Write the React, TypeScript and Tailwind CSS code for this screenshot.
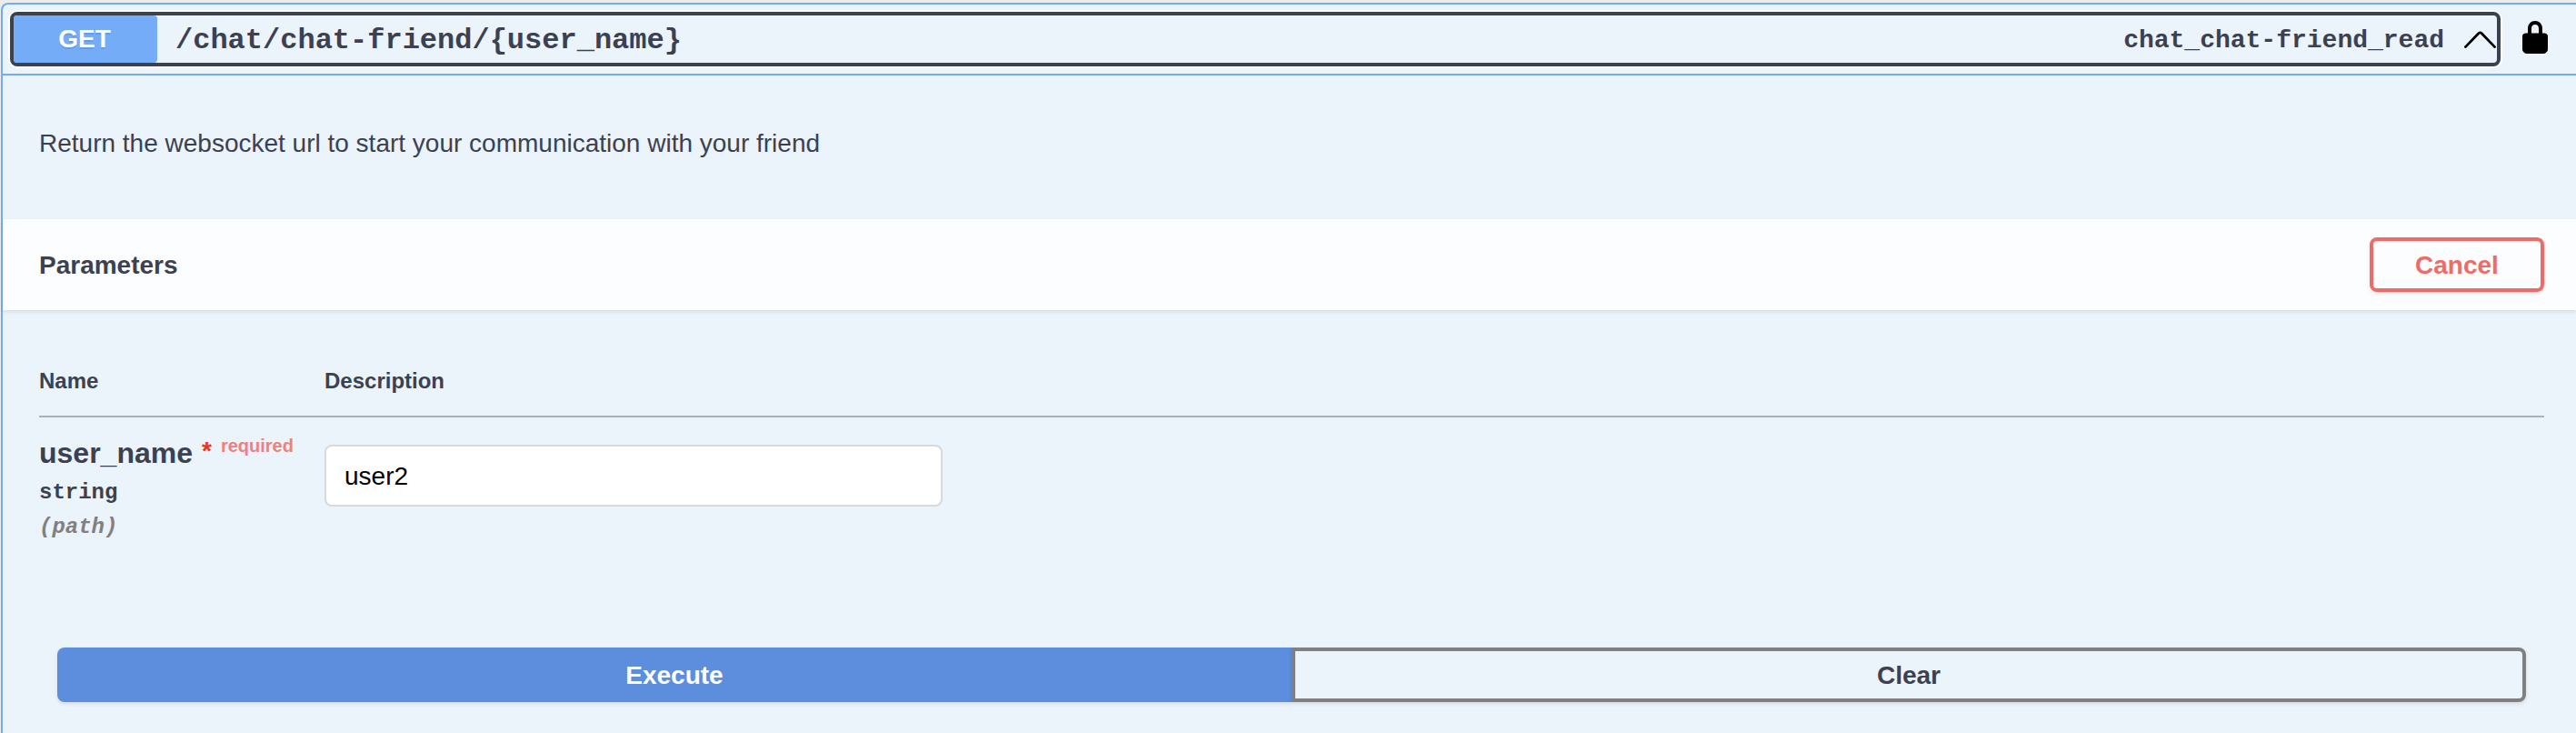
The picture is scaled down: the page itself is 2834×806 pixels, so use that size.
import React from "react";

const sans = "font-['Liberation_Sans',Arial,sans-serif]";
const mono = "font-['Liberation_Mono','Courier_New',monospace]";

function Summary() {
  return (
    <div className="flex h-[78px] items-center border-b-2 border-[#72acf8] pl-[8px]">
      <button
        type="button"
        className="flex h-[60px] w-[2740px] shrink-0 items-center rounded-[8px] border-4 border-[#3b4151] text-left shadow-[0_0_0_2px_#ffffff]"
      >
        <span className="h-[52px] w-[158px] shrink-0 rounded-[4px] bg-[#74acf8] pr-[2px] text-center text-[28px] leading-[52px] font-bold text-white [text-shadow:0_2px_0_rgba(0,0,0,0.1)]">
          GET
        </span>
        <span className={`${mono} ml-[20px] grow pt-[3px] text-[32px] leading-[49px] font-bold whitespace-nowrap`}>
          {"/chat/chat-friend/{user_name}"}
        </span>
        <span className={`${mono} pt-[3px] text-[28px] leading-[49px] font-bold whitespace-nowrap`}>
          chat_chat-friend_read
        </span>
        <svg className="mt-[2px] mr-px ml-[22px] h-[20px] w-[35px] shrink-0" viewBox="0 0 35 20" fill="none">
          <path d="M1.4 17.6 16 2.5Q17.5 1.300 19 2.500L33.600 17.600" stroke="#000" strokeWidth="2.8" strokeLinecap="round" strokeLinejoin="round" />
        </svg>
      </button>
      <svg className="mb-[5px] ml-[24px] h-[36px] w-[28px] shrink-0" viewBox="0 0 28 36">
        <path
          fill="#000"
          d="M24.8 13.500H22V8.200C22 3.200 18.400 0 14 0S6 3.200 6 8.200V13.500H3.200C1.300 13.900 0 15.100 0 16.800V31.200C0 33.600 2.600 36 5.600 36H22.400C25.400 36 28 33.600 28 31.200V16.800C28 15.100 26.700 13.900 24.800 13.500ZM10 13.500V8.200C10 5.500 11.600 4 14 4S18 5.500 18 8.200V13.500Z"
        />
      </svg>
    </div>
  );
}

function ParametersHeader() {
  return (
    <div className="flex h-[100px] items-center justify-between bg-[#fbfdfe] pr-[35px] pl-[40px] shadow-[0_2px_4px_rgba(0,0,0,0.1)]">
      <h4 className="pt-[2px] text-[28px] leading-[32px] font-bold">Parameters</h4>
      <button
        type="button"
        className="h-[60px] w-[192px] rounded-[8px] border-4 border-[#ee6c68] bg-[#fbfdfe] pt-px text-[28px] leading-[51px] font-bold text-[#ee6c68] shadow-[0_2px_4px_rgba(0,0,0,0.1)]"
      >
        Cancel
      </button>
    </div>
  );
}

function ParameterTable() {
  return (
    <div className="pt-[62px] pr-[35px] pl-[40px]">
      <div className="flex h-[56px] border-b-2 border-[#a8b2be] pt-[2px] text-[24px] leading-[28px] font-bold">
        <div className="w-[314px]">Name</div>
        <div>Description</div>
      </div>
      <div className="flex h-[253px]">
        <div className="w-[314px] shrink-0 pt-[20px]">
          <div className="flex h-[38px] items-start font-bold whitespace-nowrap">
            <span className="text-[32px] leading-[38px]">user_name</span>
            <span className="ml-[10px] pt-[1px] text-[28px] leading-[32px] text-[#eb3323]">*</span>
            <span className="ml-[10px] pt-[1px] text-[20px] leading-[20px] text-[#ec827f]">required</span>
          </div>
          <div className={`${mono} mt-[11px] text-[24px] leading-[28px] font-bold`}>string</div>
          <div className={`${mono} mt-[10px] text-[24px] leading-[28px] font-bold text-[#808080] italic`}>(path)</div>
        </div>
        <input
          type="text"
          defaultValue="user2"
          className="mt-[30px] h-[68px] w-[680px] rounded-[8px] border-2 border-[#d9d9d9] bg-white px-[20px] pt-[2px] text-[28px] text-black outline-none"
        />
      </div>
    </div>
  );
}

function Actions() {
  return (
    <div className="flex pr-[55px] pl-[60px] text-[28px] font-bold">
      <button
        type="button"
        className="h-[60px] w-[1358px] rounded-l-[8px] bg-[#5c8edd] pt-px leading-[59px] text-white shadow-[0_2px_4px_rgba(0,0,0,0.1)]"
      >
        Execute
      </button>
      <button
        type="button"
        className="h-[60px] w-[1358px] rounded-r-[8px] border-4 border-[#808080] pt-px leading-[51px] shadow-[0_2px_4px_rgba(0,0,0,0.1)]"
      >
        Clear
      </button>
    </div>
  );
}

export default function App() {
  return (
    <div className={`${sans} h-[806px] w-[2834px] overflow-hidden bg-[#ececec] pt-[3px] pl-px text-[#3b4151]`}>
      <div className="h-[803px] rounded-tl-[8px] border-t-2 border-l-2 border-[#72acf8] bg-[#ebf3fb]">
        <Summary />
        <div className="h-[158px] px-[40px] pt-[59px]">
          <p className="text-[28px] leading-[32px]">Return the websocket url to start your communication with your friend</p>
        </div>
        <ParametersHeader />
        <ParameterTable />
        <Actions />
      </div>
    </div>
  );
}
